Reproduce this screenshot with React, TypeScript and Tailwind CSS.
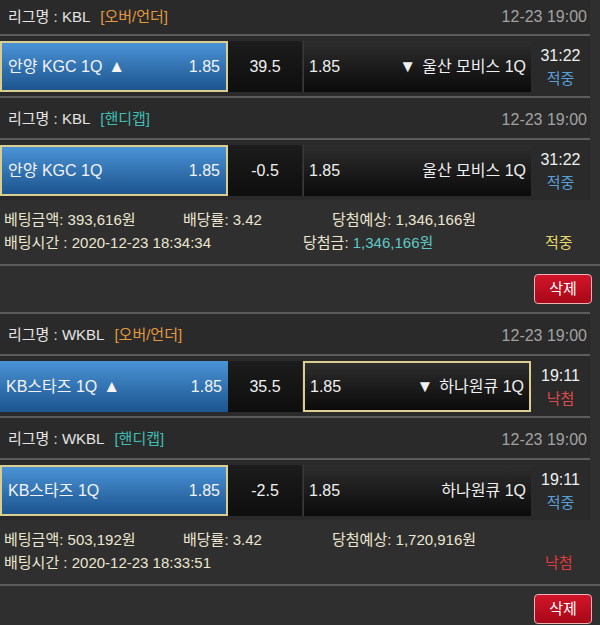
import React from 'react';

type Game = {
  league: string;
  kind: 'ou' | 'hc';
  date: string;
  home: string;
  homeOdds: string;
  line: string;
  awayOdds: string;
  away: string;
  up?: boolean;
  pick: 'home' | 'away';
  score: string;
  result: '적중' | '낙첨';
  first?: boolean;
};

type Bet = {
  games: Game[];
  amount: string;
  rate: string;
  expected: string;
  time: string;
  won?: string;
  result: '적중' | '낙첨';
};

const bets: Bet[] = [
  {
    games: [
      { league: 'KBL', kind: 'ou', date: '12-23 19:00', home: '안양 KGC 1Q', homeOdds: '1.85', line: '39.5', awayOdds: '1.85', away: '울산 모비스 1Q', up: true, pick: 'home', score: '31:22', result: '적중', first: true },
      { league: 'KBL', kind: 'hc', date: '12-23 19:00', home: '안양 KGC 1Q', homeOdds: '1.85', line: '-0.5', awayOdds: '1.85', away: '울산 모비스 1Q', pick: 'home', score: '31:22', result: '적중' },
    ],
    amount: '393,616원',
    rate: '3.42',
    expected: '1,346,166원',
    time: '2020-12-23 18:34:34',
    won: '1,346,166원',
    result: '적중',
  },
  {
    games: [
      { league: 'WKBL', kind: 'ou', date: '12-23 19:00', home: 'KB스타즈 1Q', homeOdds: '1.85', line: '35.5', awayOdds: '1.85', away: '하나원큐 1Q', up: true, pick: 'away', score: '19:11', result: '낙첨' },
      { league: 'WKBL', kind: 'hc', date: '12-23 19:00', home: 'KB스타즈 1Q', homeOdds: '1.85', line: '-2.5', awayOdds: '1.85', away: '하나원큐 1Q', pick: 'home', score: '19:11', result: '적중' },
    ],
    amount: '503,192원',
    rate: '3.42',
    expected: '1,720,916원',
    time: '2020-12-23 18:33:51',
    result: '낙첨',
  },
];

function GameBlock({ g }: { g: Game }) {
  return (
    <div className="w-[590px] bg-[#2a2a2a]">
      {/* 리그 헤더 */}
      <div
        className={`flex items-center justify-between pl-2 pr-[3px] ${
          g.first ? 'h-[34px]' : 'h-[42px] border-t-2 border-[#5c5c5c] pt-[3px]'
        }`}
      >
        <div className="flex items-center">
          <span className="text-[#e4e4e4]">리그명 : {g.league}</span>
          <span className={`ml-[10px] ${g.kind === 'ou' ? 'text-[#e2993f]' : 'text-[#3fbfb4]'}`}>
            {g.kind === 'ou' ? '[오버/언더]' : '[핸디캡]'}
          </span>
        </div>
        <span className="text-[16px] text-[#a2a2a2]">{g.date}</span>
      </div>

      {/* 경기 행 */}
      <div className="flex border-t-2 border-[#5c5c5c] pt-[5px] pb-[4px] text-[16px]">
        <div
          className={`flex h-[51px] w-[228px] items-center justify-between bg-gradient-to-b from-[#4b93d6] to-[#1c558f] px-[6px] text-[#f4f4f4] ${
            g.pick === 'home' ? 'border-2 border-[#d9cd90]' : ''
          }`}
        >
          <span className="flex items-center">
            {g.home}
            {g.up && <span className="ml-[6px] text-[17px] leading-none">▲</span>}
          </span>
          <span>{g.homeOdds}</span>
        </div>
        <div className="flex h-[51px] w-[74px] items-center justify-center bg-gradient-to-b from-[#1c1c1c] to-[#0e0e0e] text-[#f0f0f0]">
          {g.line}
        </div>
        <div
          className={`ml-px flex h-[51px] w-[228px] items-center justify-between bg-gradient-to-b from-[#2e2e2e] to-[#0b0b0b] px-[5px] text-[#f0f0f0] ${
            g.pick === 'away' ? 'border-2 border-[#d9cd90]' : 'border-l border-[#3a3a3a]'
          }`}
        >
          <span>{g.awayOdds}</span>
          <span className="flex items-center">
            {g.up && <span className="mr-[6px] text-[17px] leading-none">▼</span>}
            {g.away}
          </span>
        </div>
        <div className="flex flex-1 flex-col items-center justify-center leading-[23px]">
          <span className="text-[#f0f0f0]">{g.score}</span>
          <span className={`text-[15px] ${g.result === '적중' ? 'text-[#5a9fd9]' : 'text-[#e04a4a]'}`}>{g.result}</span>
        </div>
      </div>
    </div>
  );
}

function BetCard({ bet }: { bet: Bet }) {
  return (
    <div>
      {bet.games.map((g, i) => (
        <GameBlock key={i} g={g} />
      ))}

      {/* 베팅 정보 */}
      <div className="border-b-2 border-[#5c5c5c] pt-[8px] pb-[10px] pl-1 leading-[23px] text-[#ece6cf]">
        <div className="flex">
          <span className="w-[179px]">베팅금액: {bet.amount}</span>
          <span className="w-[149px]">배당률: {bet.rate}</span>
          <span>당첨예상: {bet.expected}</span>
        </div>
        <div className="flex">
          <span className="w-[299px]">배팅시간 : {bet.time}</span>
          <span className="w-[242px]">
            {bet.won && (
              <>
                당첨금: <span className="text-[#5ecac3]">{bet.won}</span>
              </>
            )}
          </span>
          <span className={bet.result === '적중' ? 'text-[#e6da6a]' : 'text-[#e03a3a]'}>{bet.result}</span>
        </div>
      </div>

      {/* 삭제 버튼 */}
      <div className="flex justify-end pt-[8px] pb-[8px] pr-2">
        <button className="h-[30px] w-[58px] rounded-[4px] border-[1.5px] border-[#e9b2b5] bg-gradient-to-b from-[#d2142a] to-[#a80818] text-[15px] text-white">
          삭제
        </button>
      </div>
    </div>
  );
}

export default function App() {
  return (
    <div className="h-[625px] w-[600px] overflow-hidden bg-[#2f2f2f] font-['Liberation_Sans','Noto_Sans_CJK_KR',sans-serif] text-[15px]">
      {bets.map((b, i) => (
        <BetCard key={i} bet={b} />
      ))}
    </div>
  );
}
